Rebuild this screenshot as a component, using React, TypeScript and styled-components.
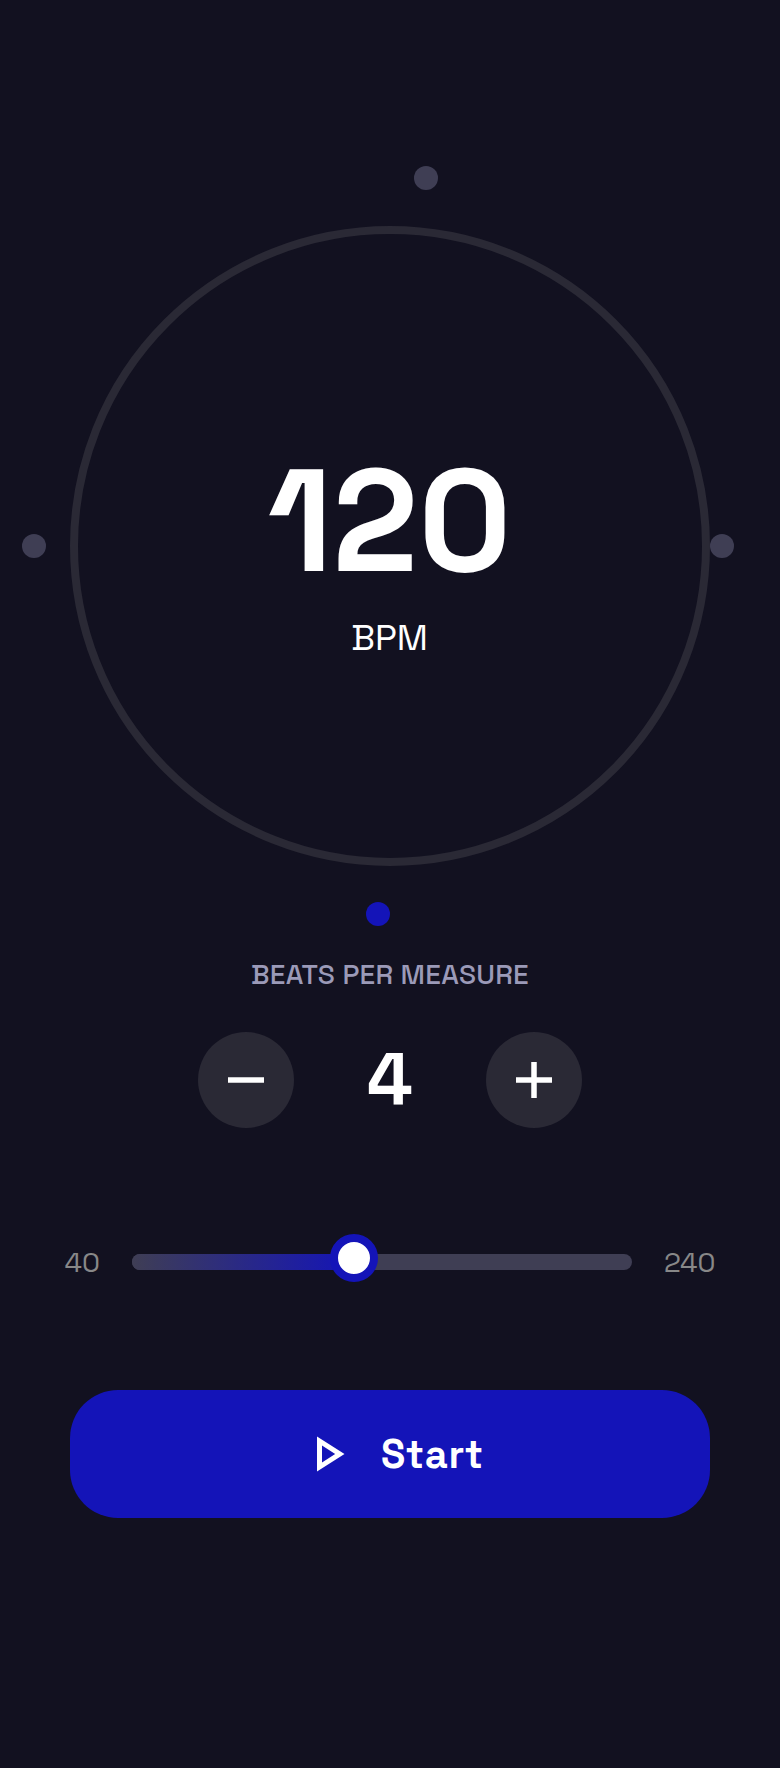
import React from "react";
import styled, { createGlobalStyle } from "styled-components";

const GlobalStyle = createGlobalStyle`
  * { box-sizing: border-box; }
  body { margin: 0; background: #121120; }
`;

const Screen = styled.main`
  display: flex;
  flex-direction: column;
  align-items: center;
  width: 780px;
  height: 1768px;
  padding-top: 226px;
  background: #121120;
  color: #fff;
  font-family: "Space Grotesk", Inter, "Liberation Sans", sans-serif;
  overflow: hidden;
`;

const Dial = styled.section`
  position: relative;
  display: flex;
  flex-direction: column;
  align-items: center;
  width: 640px;
  height: 640px;
  padding-top: 215px;
  border: 8px solid #2a2935;
  border-radius: 50%;
`;

const Beat = styled.i<{ $x: number; $y: number; $active?: boolean }>`
  position: absolute;
  left: ${(p) => p.$x}px;
  top: ${(p) => p.$y}px;
  width: 24px;
  height: 24px;
  border-radius: 50%;
  background: ${(p) => (p.$active ? "#1414b8" : "#3f3e54")};
`;

const Tempo = styled.div`
  margin-right: 1px;
  font-size: 144px;
  line-height: 144px;
  font-weight: 700;
`;

const Unit = styled.div`
  margin: 25px 1px 0 0;
  font-size: 36px;
  line-height: 40px;
`;

const Label = styled.div`
  margin-top: 92px;
  font-size: 28px;
  line-height: 32px;
  font-weight: 500;
  letter-spacing: 0.2px;
  color: #9b9ab8;
`;

const Stepper = styled.div`
  display: flex;
  align-items: center;
  margin-top: 42px;
`;

const RoundButton = styled.button`
  display: flex;
  align-items: center;
  justify-content: center;
  width: 96px;
  height: 96px;
  padding: 0;
  border: 0;
  border-radius: 50%;
  background: #2a2935;
  color: #fff;
`;

const Count = styled.div`
  width: 192px;
  height: 96px;
  text-align: center;
  font-size: 72px;
  line-height: 94px;
  font-weight: 700;
`;

const SliderRow = styled.div`
  display: flex;
  align-items: center;
  height: 48px;
  width: 780px;
  padding-left: 48px;
  margin-top: 110px;
`;

const Limit = styled.span<{ $side: "start" | "end" }>`
  width: 84px;
  padding-${(p) => (p.$side === "start" ? "right" : "left")}: 32px;
  text-align: ${(p) => (p.$side === "start" ? "right" : "left")};
  font-size: 28px;
  line-height: 48px;
  font-weight: 400;
  color: #888;
`;

const Track = styled.div`
  position: relative;
  width: 500px;
  height: 16px;
  border-radius: 8px;
  background: #3f3e54;
`;

const Fill = styled.div`
  width: 222px;
  height: 16px;
  border-radius: 8px;
  background: linear-gradient(90deg, #3f3e54, #1414b8);
`;

const Thumb = styled.div`
  position: absolute;
  left: 198px;
  top: -20px;
  width: 48px;
  height: 48px;
  border: 8px solid #1414b8;
  border-radius: 50%;
  background: #fff;
`;

const StartButton = styled.button`
  display: flex;
  align-items: center;
  width: 640px;
  height: 128px;
  margin-top: 104px;
  padding: 0 0 0 227px;
  gap: 24px;
  border: 0;
  border-radius: 48px;
  background: #1414b8;
  color: #fff;
  font-family: inherit;
  font-size: 40px;
  line-height: 48px;
  font-weight: 700;
  letter-spacing: 0.6px;
`;

const StartText = styled.span`
  padding-top: 2px;
`;

export default function App() {
  return (
    <>
      <GlobalStyle />
      <Screen>
        <Dial>
          <Beat $x={336} $y={-68} />
          <Beat $x={632} $y={300} />
          <Beat $x={288} $y={668} $active />
          <Beat $x={-56} $y={300} />
          <Tempo>120</Tempo>
          <Unit>BPM</Unit>
        </Dial>
        <Label>BEATS PER MEASURE</Label>
        <Stepper>
          <RoundButton aria-label="Fewer beats">
            <svg width="36" height="36" viewBox="0 0 36 36" fill="none" stroke="currentColor" strokeWidth="5.5">
              <path d="M0 18H36" />
            </svg>
          </RoundButton>
          <Count>4</Count>
          <RoundButton aria-label="More beats">
            <svg width="36" height="36" viewBox="0 0 36 36" fill="none" stroke="currentColor" strokeWidth="5.5">
              <path d="M0 18H36M18 0V36" />
            </svg>
          </RoundButton>
        </Stepper>
        <SliderRow>
          <Limit $side="start">40</Limit>
          <Track>
            <Fill />
            <Thumb />
          </Track>
          <Limit $side="end">240</Limit>
        </SliderRow>
        <StartButton>
          <svg width="60" height="60" viewBox="0 0 24 24" fill="currentColor">
            <path d="M10 8.64 15.27 12 10 15.36V8.64M8 5v14l11-7L8 5z" />
          </svg>
          <StartText>Start</StartText>
        </StartButton>
      </Screen>
    </>
  );
}
